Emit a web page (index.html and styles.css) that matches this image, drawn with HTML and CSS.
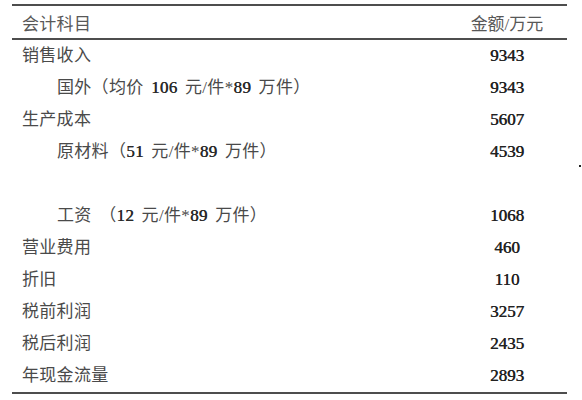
FILE: index.html
```html
<!DOCTYPE html>
<html lang="zh">
<head>
<meta charset="utf-8">
<title>会计科目</title>
<link rel="stylesheet" href="styles.css">
</head>
<body>
<div class="page">
  <table class="ledger">
    <thead>
      <tr><th class="item">会计科目</th><th class="amt">金额/万元</th></tr>
    </thead>
    <tbody>
      <tr><td class="item">销售收入</td><td class="amt">9343</td></tr>
      <tr><td class="item sub">国外（均价 <span class="num">106</span> 元/件*<span class="num">89</span> 万件）</td><td class="amt">9343</td></tr>
      <tr><td class="item">生产成本</td><td class="amt">5607</td></tr>
      <tr><td class="item sub">原材料（<span class="num">51</span> 元/件*<span class="num">89</span> 万件）</td><td class="amt">4539</td></tr>
      <tr class="blank"><td class="item"></td><td class="amt"></td></tr>
      <tr><td class="item sub">工资 （<span class="num">12</span> 元/件*<span class="num">89</span> 万件）</td><td class="amt">1068</td></tr>
      <tr><td class="item">营业费用</td><td class="amt">460</td></tr>
      <tr><td class="item">折旧</td><td class="amt">110</td></tr>
      <tr><td class="item">税前利润</td><td class="amt">3257</td></tr>
      <tr><td class="item">税后利润</td><td class="amt">2435</td></tr>
      <tr><td class="item">年现金流量</td><td class="amt">2893</td></tr>
    </tbody>
  </table>
  <span class="speck"></span>
</div>
</body>
</html>
```
FILE: styles.css
```css
html, body {
  margin: 0;
  padding: 0;
  background: #ffffff;
}

.page {
  position: relative;
  width: 582px;
  height: 400px;
  padding: 4px 0 0 12px;
  box-sizing: border-box;
}

.ledger {
  width: 555px;
  border-collapse: collapse;
  border-top: 2px solid #4d4d4d;
  border-bottom: 2px solid #4d4d4d;
  font-family: "Liberation Serif", "Noto Sans CJK SC", serif;
  font-size: 17px;
  color: #4a4a4a;
}

.ledger thead tr {
  border-bottom: 2px solid #4d4d4d;
}

.ledger th {
  height: 32px;
  padding: 0;
  font-weight: normal;
  color: #585858;
  vertical-align: middle;
}

.ledger td {
  height: 32px;
  padding: 0;
  vertical-align: middle;
  line-height: 20px;
}

.item {
  text-align: left;
  padding-left: 10px !important;
  letter-spacing: 0.3px;
}

.item.sub {
  padding-left: 45px !important;
  word-spacing: 3px;
}

.num {
  color: #2a2a2a;
  text-shadow: 0.4px 0 0 #2a2a2a;
}

.amt {
  width: 120px;
  text-align: center;
  color: #222222;
  text-shadow: 0.4px 0 0 #222222;
}

.ledger th.amt {
  color: #585858;
  text-shadow: none;
}

.speck {
  position: absolute;
  left: 579px;
  top: 165px;
  width: 2px;
  height: 2px;
  background: #222222;
}
```
